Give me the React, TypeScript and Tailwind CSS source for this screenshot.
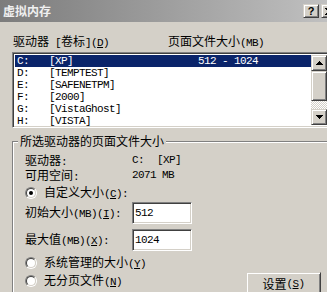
import React from "react";

const mono = "font-['Liberation_Mono',monospace] text-[11px] tracking-[-0.6px]";
const raised =
  "border border-t-[#d4d0c8] border-l-[#d4d0c8] border-b-[#404040] border-r-[#404040] shadow-[inset_1px_1px_#ffffff,inset_-1px_-1px_#808080] bg-[#d4d0c8]";
const sunken =
  "border border-t-[#808080] border-l-[#808080] border-b-white border-r-white shadow-[inset_1px_1px_#404040,inset_-1px_-1px_#d4d0c8] bg-white";

// "&X" underlines X, ascii runs get the narrow mono font
const Txt = ({ s }: { s: string }) => {
  const parts = s.split(/([\x20-\x7e]+)/).filter(Boolean);
  return (
    <>
      {parts.map((p, i) => {
        if (!/^[\x20-\x7e]+$/.test(p)) return <span key={i}>{p}</span>;
        const bits = p.split(/&(.)/);
        return (
          <span key={i} className={`${mono} whitespace-pre`}>
            {bits.map((b, j) => (j % 2 ? <u key={j}>{b}</u> : b))}
          </span>
        );
      })}
    </>
  );
};

const Arrow = ({ down }: { down?: boolean }) => (
  <svg width="7" height="4" viewBox="0 0 7 4" shapeRendering="crispEdges">
    {down ? (
      <path d="M0 0h7v1H0zM1 1h5v1H1zM2 2h3v1H2zM3 3h1v1H3z" fill="#000" />
    ) : (
      <path d="M3 0h1v1H3zM2 1h3v1H2zM1 2h5v1H1zM0 3h7v1H0z" fill="#000" />
    )}
  </svg>
);

const Radio = ({ checked }: { checked?: boolean }) => (
  <span className="w-[12px] h-[12px] rounded-full border border-t-[#808080] border-l-[#808080] border-b-white border-r-white flex">
    <span className="flex-1 rounded-full border border-t-[#404040] border-l-[#404040] border-b-[#d4d0c8] border-r-[#d4d0c8] bg-white flex items-center justify-center">
      {checked && <span className="w-[4px] h-[4px] rounded-full bg-black" />}
    </span>
  </span>
);

const drives = [
  { d: "C:", label: "[XP]", size: "512 - 1024" },
  { d: "D:", label: "[TEMPTEST]", size: "" },
  { d: "E:", label: "[SAFENETPM]", size: "" },
  { d: "F:", label: "[2000]", size: "" },
  { d: "G:", label: "[VistaGhost]", size: "" },
  { d: "H:", label: "[VISTA]", size: "" },
];

export default function App() {
  return (
    <div className="w-[327px] h-[292px] overflow-hidden bg-[#d4d0c8] text-black font-['Noto_Sans_CJK_SC',sans-serif] text-[12px] leading-[14px]">
      <div className="w-[345px]">
        {/* title bar */}
        <div className="h-[22px] flex items-center pl-[3px] pr-[8px] bg-gradient-to-r from-[#7c7c7c] to-[#c4c4c4]">
          <span className="font-bold text-[#f0f0f0] text-[12px]">虚拟内存</span>
          <div className="ml-auto flex gap-[2px]">
            <div className={`${raised} w-[16px] h-[14px] flex items-center justify-center`}>
              <span className="font-['Liberation_Sans',sans-serif] font-bold text-[11px] leading-none">?</span>
            </div>
            <div className={`${raised} w-[16px] h-[14px] flex items-center justify-center`}>
              <svg width="8" height="7" viewBox="0 0 8 7" shapeRendering="crispEdges">
                <path d="M0 0h2l2 2 2-2h2L5 3.5 8 7H6L4 5 2 7H0l3-3.5z" fill="#000" />
              </svg>
            </div>
          </div>
        </div>

        <div className="pl-[12px] pt-[12px]">
          <div className="flex h-[14px] pl-[1px]">
            <span className="w-[155px]">
              <Txt s="驱动器 [卷标](&D)" />
            </span>
            <span>
              <Txt s="页面文件大小(MB)" />
            </span>
          </div>

          {/* drive list */}
          <div className={`${sunken} mt-[4px] w-[317px] h-[76px] flex p-[1px]`}>
            <div className="flex-1 flex flex-col pt-[1px] pl-[1px]">
              {drives.map((r, i) => (
                <div
                  key={r.d}
                  className={`h-[12px] leading-[12px] flex pl-[2px] ${mono} whitespace-pre ${
                    i === 0 ? "bg-[#0a246a] text-white" : ""
                  }`}
                >
                  <span className="w-[32px]">{r.d}</span>
                  <span className="w-[149px]">{r.label}</span>
                  <span>{r.size}</span>
                </div>
              ))}
            </div>
            <div className="w-[16px] flex flex-col pt-[1px] pb-[1px]">
              <div className={`${raised} h-[16px] flex items-center justify-center`}>
                <Arrow />
              </div>
              <div className={`${raised} h-[30px]`} />
              <div className="flex-1 bg-[repeating-conic-gradient(#d4d0c8_0_25%,#ffffff_0_50%)] bg-[length:2px_2px]" />
              <div className={`${raised} h-[16px] flex items-center justify-center`}>
                <Arrow down />
              </div>
            </div>
          </div>

          {/* group box */}
          <fieldset className="mt-[6px] w-[325px] h-[200px] border border-[#808080] shadow-[inset_1px_1px_#ffffff,1px_1px_#ffffff]">
            <legend className="ml-[5px] px-[2px] h-[14px] leading-[14px] bg-[#d4d0c8]">所选驱动器的页面文件大小</legend>
            <div className="pl-[12px] pr-[15px] pt-[5px] flex flex-col">
              <div className="h-[14px] flex">
                <span className="w-[107px]">
                  <Txt s="驱动器:" />
                </span>
                <span className={`${mono} whitespace-pre w-[25px]`}>C:</span>
                <span className={`${mono} whitespace-pre`}>[XP]</span>
              </div>
              <div className="h-[14px] flex mt-[1px]">
                <span className="w-[107px]">
                  <Txt s="可用空间:" />
                </span>
                <span className={`${mono} whitespace-pre`}>2071 MB</span>
              </div>
              <div className="h-[14px] flex items-center gap-[7px] mt-[4px]">
                <Radio checked />
                <span>
                  <Txt s="自定义大小(&C):" />
                </span>
              </div>
              <div className="h-[22px] flex items-center mt-[2px]">
                <span className="w-[107px]">
                  <Txt s="初始大小(MB)(&I):" />
                </span>
                <input
                  readOnly
                  value="512"
                  className={`${sunken} ${mono} w-[60px] h-[22px] pl-[2px] outline-none`}
                />
              </div>
              <div className="h-[22px] flex items-center mt-[5px]">
                <span className="w-[107px]">
                  <Txt s="最大值(MB)(&X):" />
                </span>
                <input
                  readOnly
                  value="1024"
                  className={`${sunken} ${mono} w-[60px] h-[22px] pl-[2px] outline-none`}
                />
              </div>
              <div className="h-[14px] flex items-center gap-[7px] mt-[5px]">
                <Radio />
                <span>
                  <Txt s="系统管理的大小(&Y)" />
                </span>
              </div>
              <div className="flex items-start mt-[2px]">
                <div className="h-[14px] flex items-center gap-[7px] mt-[2px]">
                  <Radio />
                  <span>
                    <Txt s="无分页文件(&N)" />
                  </span>
                </div>
                <button className={`${raised} ml-auto w-[75px] h-[23px] flex items-center justify-center`}>
                  <Txt s="设置(&S)" />
                </button>
              </div>
            </div>
          </fieldset>
        </div>
      </div>
    </div>
  );
}
